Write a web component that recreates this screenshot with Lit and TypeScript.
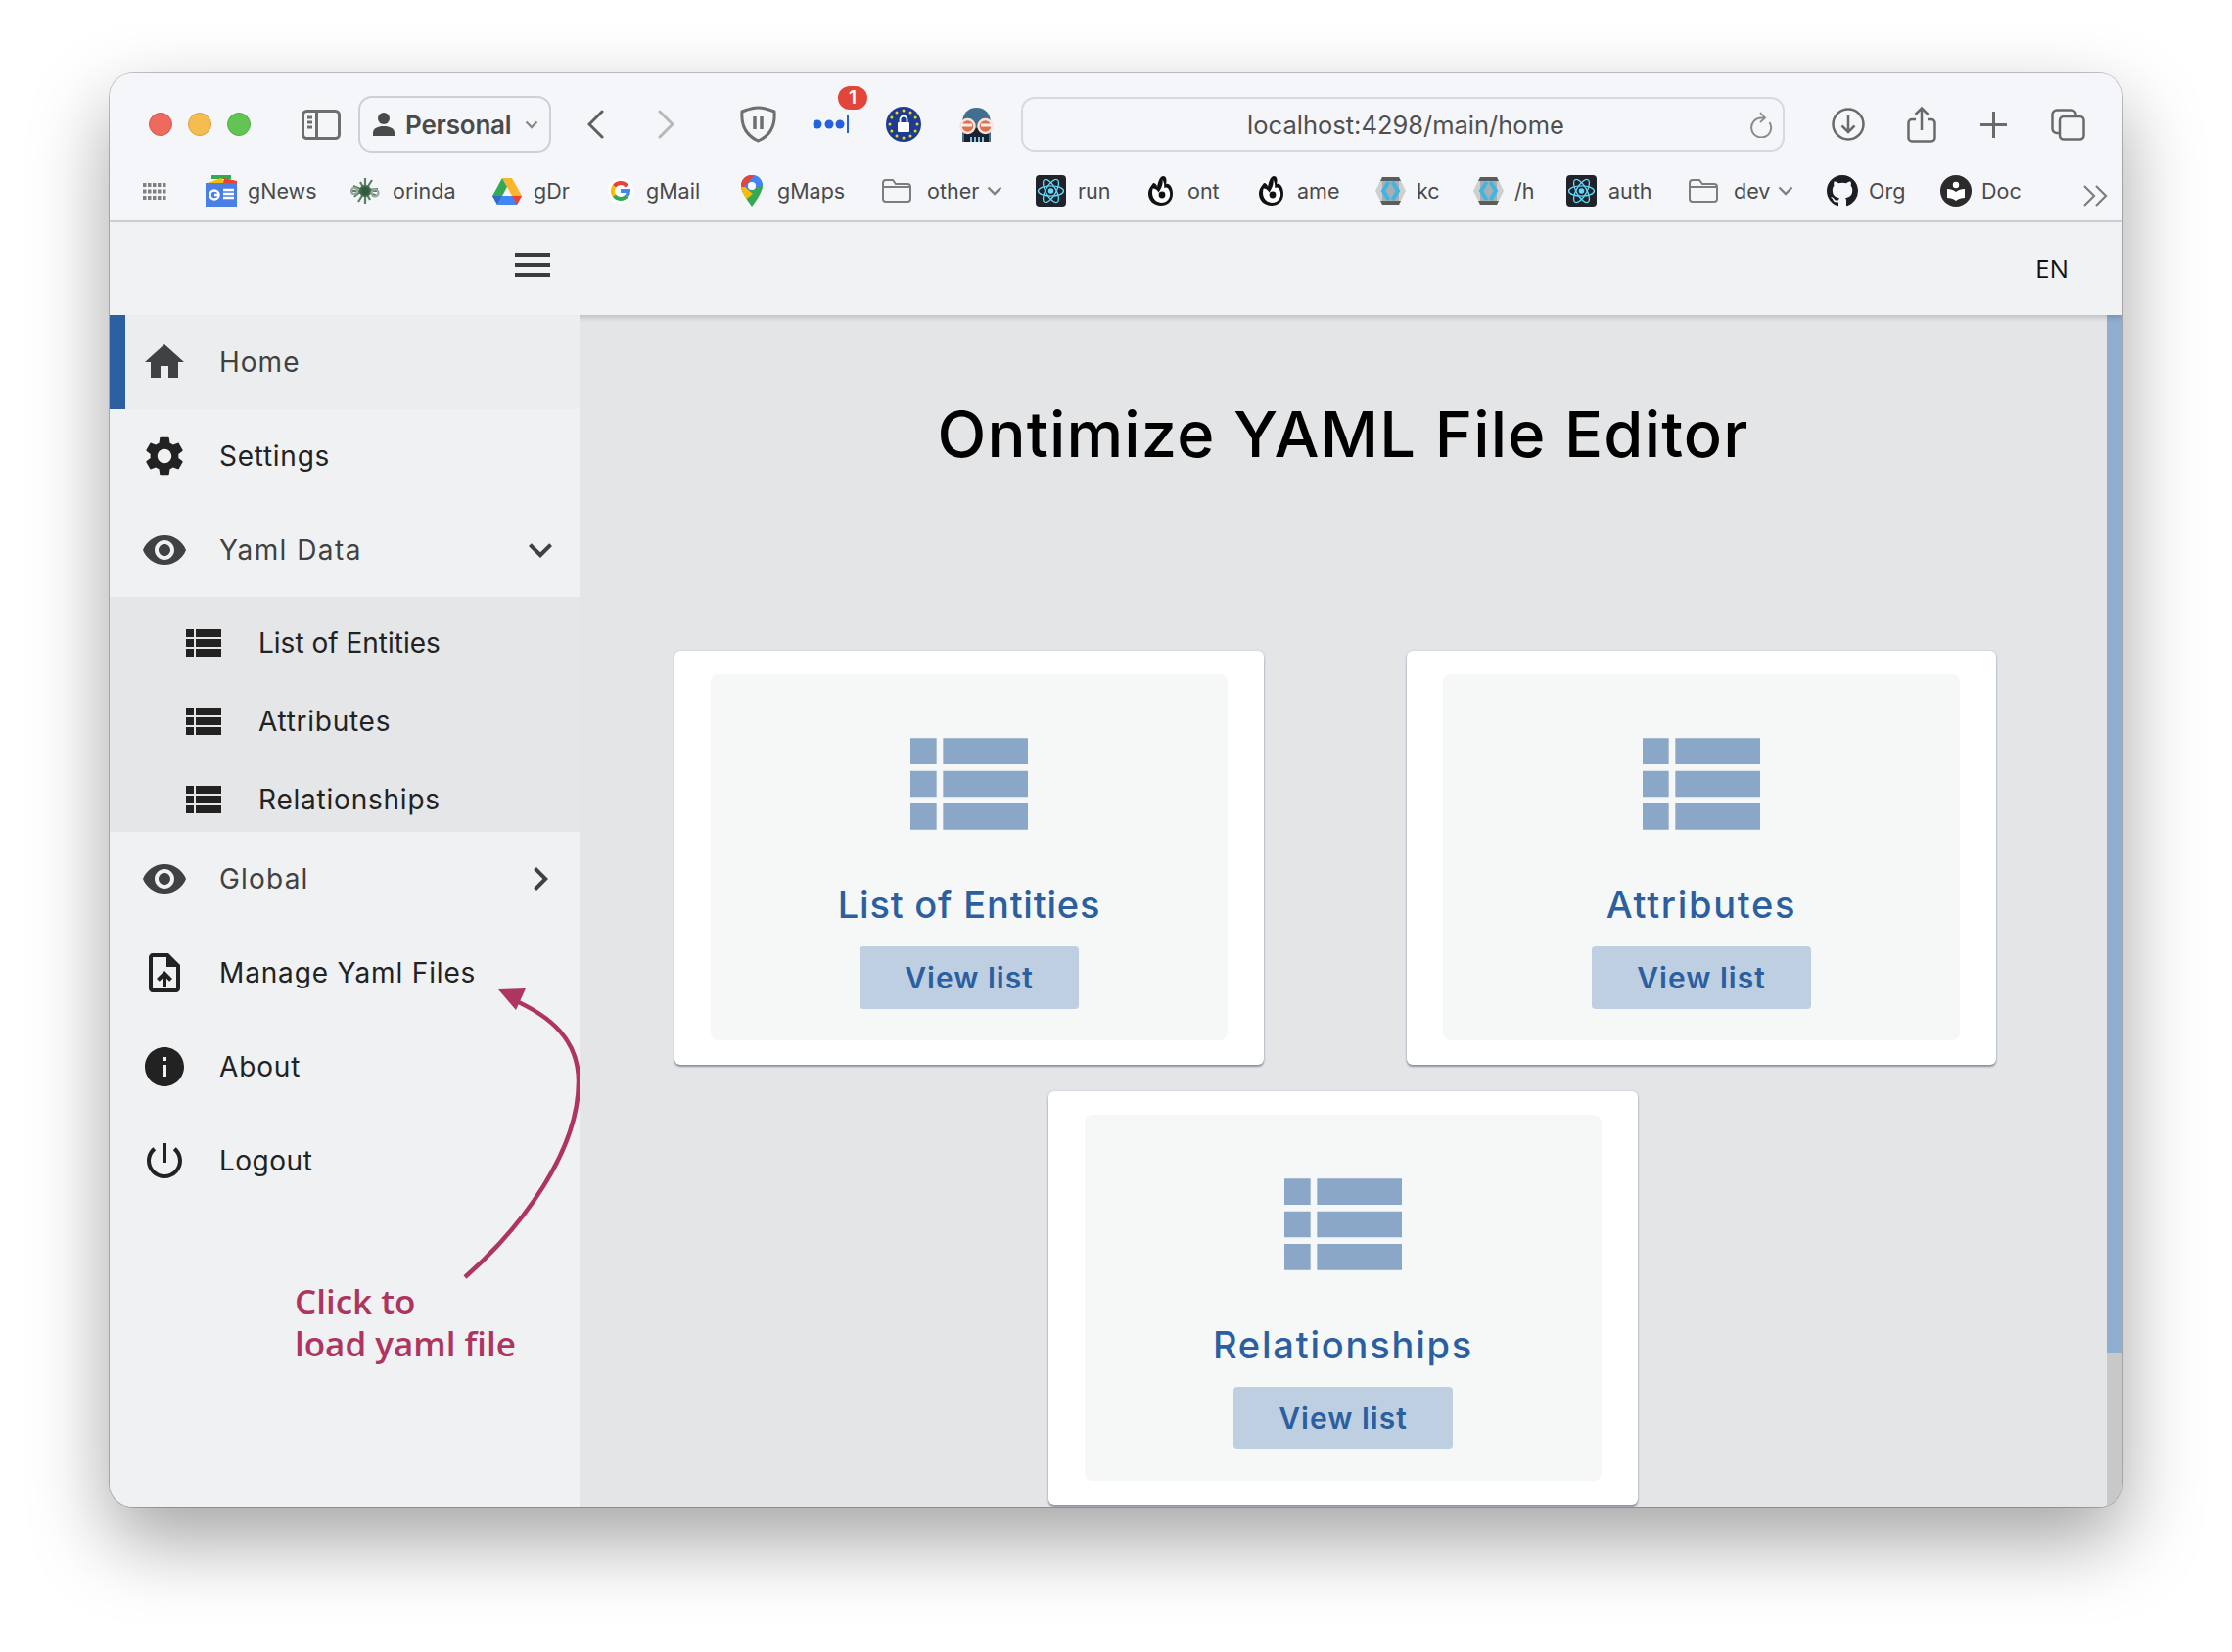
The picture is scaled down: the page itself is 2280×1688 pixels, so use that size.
import { LitElement, html, css, svg } from "lit";
import { customElement } from "lit/decorators.js";

// material icon paths, all on a 24 box
const ICONS: Record<string, string> = {
  home: "M10 20v-6h4v6h5v-8h3L12 3 2 12h3v8z",
  settings:
    "M19.14 12.94c.04-.3.06-.61.06-.94 0-.32-.02-.64-.07-.94l2.03-1.58c.18-.14.23-.41.12-.61l-1.92-3.32c-.12-.22-.37-.29-.59-.22l-2.39.96c-.5-.38-1.03-.7-1.62-.94l-.36-2.54c-.04-.24-.24-.41-.48-.41h-3.84c-.24 0-.43.17-.47.41l-.36 2.54c-.59.24-1.13.57-1.62.94l-2.39-.96c-.22-.08-.47 0-.59.22L2.74 8.87c-.12.21-.08.47.12.61l2.03 1.58c-.05.3-.09.63-.09.94s.02.64.07.94l-2.03 1.58c-.18.14-.23.41-.12.61l1.92 3.32c.12.22.37.29.59.22l2.39-.96c.5.38 1.03.7 1.62.94l.36 2.54c.05.24.24.41.48.41h3.84c.24 0 .44-.17.47-.41l.36-2.54c.59-.24 1.13-.56 1.62-.94l2.39.96c.22.08.47 0 .59-.22l1.92-3.32c.12-.22.07-.47-.12-.61l-2.01-1.58zM12 15.6c-1.98 0-3.6-1.62-3.6-3.6s1.62-3.6 3.6-3.6 3.6 1.62 3.6 3.6-1.62 3.6-3.6 3.6z",
  eye: "M12 4.5C7 4.5 2.73 7.61 1 12c1.73 4.39 6 7.5 11 7.5s9.27-3.11 11-7.5c-1.73-4.39-6-7.5-11-7.5zM12 17c-2.76 0-5-2.24-5-5s2.24-5 5-5 5 2.24 5 5-2.24 5-5 5zm0-8c-1.66 0-3 1.34-3 3s1.34 3 3 3 3-1.34 3-3-1.34-3-3-3z",
  more: "M16.59 8.59L12 13.17 7.41 8.59 6 10l6 6 6-6z",
  right: "M10 6L8.59 7.41 13.17 12l-4.58 4.59L10 18l6-6z",
  list: "M3 5h4v4H3zM8 5h13v4H8zM3 10h4v4H3zM8 10h13v4H8zM3 15h4v4H3zM8 15h13v4H8z",
  upload:
    "M14 2H6c-1.1 0-1.99.9-1.99 2L4 20c0 1.1.89 2 1.99 2H18c1.1 0 2-.9 2-2V8l-6-6zm4 18H6V4h7v5h5v11zM8 15.01l1.41 1.41L11 14.84V19h2v-4.16l1.59 1.59L16 15.01 12.01 11z",
  info: "M12 2C6.48 2 2 6.48 2 12s4.48 10 10 10 10-4.48 10-10S17.52 2 12 2zm1 15h-2v-6h2v6zm0-8h-2V7h2v2z",
  power:
    "M13 3h-2v10h2V3zm4.83 2.17l-1.42 1.42C17.99 7.86 19 9.81 19 12c0 3.87-3.13 7-7 7s-7-3.13-7-7c0-2.19 1.01-4.14 2.58-5.42L6.17 5.17C4.23 6.82 3 9.26 3 12c0 4.97 4.03 9 9 9s9-4.03 9-9c0-2.74-1.23-5.18-3.17-6.83z",
};

const mat = (name: string, cls = "ic48") =>
  html`<svg class=${cls} viewBox="0 0 24 24"><path d=${ICONS[name]} fill="currentColor"></path></svg>`;

const folder = html`<svg width="30" height="24" viewBox="0 0 30 24" fill="none" stroke="#7d7d7d" stroke-width="2">
  <path d="M1 20V4a3 3 0 0 1 3-3h7l3 4h12a3 3 0 0 1 3 3v12a3 3 0 0 1-3 3H4a3 3 0 0 1-3-3z"></path><path d="M1 8h28"></path>
</svg>`;

const smallChevron = html`<svg class="bm-chev" width="16" height="10" viewBox="0 0 16 10" fill="none" stroke="#808080" stroke-width="2.4">
  <path d="M1.5 1.5L8 8l6.5-6.5"></path>
</svg>`;

const atom = html`<svg width="31" height="32" viewBox="0 0 31 32">
  <rect width="31" height="32" rx="4" fill="#20232a"></rect>
  <g fill="none" stroke="#61dafb" stroke-width="1.3">
    <ellipse cx="15.5" cy="16" rx="13" ry="5.2"></ellipse>
    <ellipse cx="15.5" cy="16" rx="13" ry="5.2" transform="rotate(60 15.5 16)"></ellipse>
    <ellipse cx="15.5" cy="16" rx="13" ry="5.2" transform="rotate(120 15.5 16)"></ellipse>
  </g>
  <circle cx="15.5" cy="16" r="2.8" fill="#61dafb"></circle>
</svg>`;

const hand = html`<svg width="27" height="32" viewBox="0 0 27 32">
  <path d="M16 1c4 0 4 5 3 8 4-1 7 4 7 10 0 8-6 12-12 12C7 31 1 26 1 19c0-5 3-8 5-11 2 0 4 2 4 4 1-4 2-10 6-11z" fill="#111"></path>
  <path d="M15.500 4.500c.8 4-1 9-4 13-1.500-2.500-3.500-4-5.800-4-2 6 .3 13.500 8.300 14.500 6.500 0 10-5 9-10.500-.8-4.500-3.500-6-5.800-4.500.3-3-.2-6-1.700-8.500z" fill="#fff"></path>
  <circle cx="15" cy="20" r="3.400" fill="#111"></circle>
</svg>`;

const keycloak = html`<svg width="31" height="28" viewBox="0 0 31 28">
  <path d="M7 0h17l7 14-7 14H7L0 14z" fill="#cfcfcf"></path>
  <path d="M7 0h17l2 4H5zM5 24h21l-2 4H7z" fill="#5c5c5c"></path>
  <path d="M7 4h17v20H7z" fill="#a9aeb2"></path>
  <path d="M13.500 5L8 14l5.500 9M17.500 5L23 14l-5.500 9" fill="none" stroke="#3db5e6" stroke-width="4"></path>
</svg>`;

type Bookmark = { x: number; lx: number; label: string; icon: unknown; chev?: boolean };

const euStars = Array.from({ length: 12 }, (_, i) => {
  const a = (i * Math.PI) / 6;
  return svg`<circle cx=${18 + 14 * Math.cos(a)} cy=${18 + 14 * Math.sin(a)} r="1.500" fill="#f5d327"></circle>`;
});

const bookmarks: Bookmark[] = [
  {
    x: 210, lx: 253, label: "gNews",
    icon: html`<svg width="32" height="32" viewBox="0 0 32 32">
      <path d="M6 4V0h20v4z" fill="#34a853"></path>
      <path d="M2 8l14-5 4 5z" fill="#fbbc04"></path>
      <path d="M18 8l1-5 13 3v2z" fill="#ea4335"></path>
      <rect y="8" width="32" height="24" fill="#4a7fe5"></rect>
      <circle cx="9" cy="20" r="4.500" fill="none" stroke="#fff" stroke-width="2.500"></circle>
      <path d="M9 20h5M18 15h11M18 19h11M18 23h11" stroke="#fff" stroke-width="2.400"></path>
    </svg>`,
  },
  {
    x: 358, lx: 401, label: "orinda",
    icon: html`<svg width="30" height="30" viewBox="0 0 30 30" fill="none" stroke="#3f6b49" stroke-width="2.200">
      <path d="M15 2v26M10 6l10 18M22 4L8 26M2 15h26M3 10l24 10M4 21c4-6 18-8 24-8" opacity=".85"></path>
      <circle cx="15" cy="15" r="5" fill="#2f5c3b"></circle>
      <circle cx="25" cy="17" r="3.500" stroke="#98a79c"></circle>
      <circle cx="4" cy="15" r="3" stroke="#98a79c"></circle>
    </svg>`,
  },
  {
    x: 503, lx: 545, label: "gDr",
    icon: html`<svg width="30" height="27" viewBox="0 0 30 27">
      <path d="M10 0h10l10 18h-10z" fill="#f9b62c"></path>
      <path d="M10 0l5 9-10 18-5-9z" fill="#34a853"></path>
      <path d="M10 18h20l-5 9H5z" fill="#4285f4"></path>
      <path d="M5 27l5-9h-10z" fill="#2b6bd6"></path>
      <path d="M25 27l5-9h-10z" fill="#ea4335"></path>
    </svg>`,
  },
  {
    x: 621, lx: 660, label: "gMail",
    icon: html`<svg width="26" height="30" viewBox="0 0 26 30">
      <circle cx="13" cy="15" r="13" fill="#fff"></circle>
      <g fill="none" stroke-width="4">
        <path d="M19.400 10.200A8 8 0 0 0 6.500 10.300" stroke="#ea4335"></path>
        <path d="M6.500 10.300A8 8 0 0 0 6.500 19.700" stroke="#fbbc04"></path>
        <path d="M6.500 19.700A8 8 0 0 0 19 20.300" stroke="#34a853"></path>
        <path d="M19 20.300A8 8 0 0 0 21 15h-8" stroke="#4285f4"></path>
      </g>
    </svg>`,
  },
  {
    x: 756, lx: 794, label: "gMaps",
    icon: html`<svg width="24" height="32" viewBox="0 0 24 32">
      <clipPath id="pin"><path d="M12 0C5.500 0 1 4.800 1 11c0 7 11 21 11 21s11-14 11-21C23 4.800 18.500 0 12 0z"></path></clipPath>
      <g clip-path="url(#pin)">
        <rect width="24" height="32" fill="#34a853"></rect>
        <path d="M0 0h24v10L0 20z" fill="#4285f4"></path>
        <path d="M0 0h15L4 12H0z" fill="#ea4335"></path>
        <path d="M0 12h5l8 7-9 7-4-5z" fill="#fbbc04"></path>
      </g>
      <circle cx="12" cy="11" r="4" fill="#fff"></circle>
    </svg>`,
  },
  { x: 901, lx: 947, label: "other", icon: folder, chev: true },
  { x: 1058, lx: 1101, label: "run", icon: atom },
  { x: 1172, lx: 1213, label: "ont", icon: hand },
  { x: 1285, lx: 1325, label: "ame", icon: hand },
  { x: 1405, lx: 1447, label: "kc", icon: keycloak },
  { x: 1505, lx: 1547, label: "/h", icon: keycloak },
  { x: 1600, lx: 1643, label: "auth", icon: atom },
  { x: 1725, lx: 1771, label: "dev", icon: folder, chev: true },
  {
    x: 1866, lx: 1909, label: "Org",
    icon: html`<svg width="32" height="32" viewBox="0 0 16 16">
      <path fill="#1b1f23" d="M8 0C3.580 0 0 3.580 0 8c0 3.540 2.290 6.530 5.470 7.590.4.07.55-.17.55-.38 0-.19-.01-.82-.01-1.490-2.010.37-2.530-.49-2.690-.94-.09-.23-.48-.94-.82-1.130-.28-.15-.68-.52-.01-.53.63-.01 1.080.58 1.230.82.72 1.210 1.870.87 2.330.66.07-.52.28-.87.51-1.070-1.780-.2-3.640-.89-3.640-3.950 0-.87.31-1.590.82-2.150-.08-.2-.36-1.020.08-2.120 0 0 .67-.21 2.200.82.64-.18 1.320-.27 2-.27s1.360.09 2 .27c1.530-1.040 2.200-.82 2.200-.82.44 1.100.16 1.920.08 2.120.51.56.82 1.270.82 2.150 0 3.070-1.870 3.750-3.650 3.950.29.25.54.73.54 1.480 0 1.070-.01 1.930-.01 2.200 0 .21.15.46.55.38A8.013 8.013 0 0 0 16 8c0-4.420-3.580-8-8-8z"></path>
    </svg>`,
  },
  {
    x: 1982, lx: 2024, label: "Doc",
    icon: html`<svg width="32" height="32" viewBox="0 0 32 32">
      <circle cx="16" cy="16" r="16" fill="#2b2b2b"></circle>
      <circle cx="16" cy="10" r="3.200" fill="#fff"></circle>
      <path d="M7 14c3 0 7 1 9 3 2-2 6-3 9-3v9c-3 0-7 1-9 3-2-2-6-3-9-3z" fill="#fff"></path>
    </svg>`,
  },
];

// track: letter spacing so each label keeps the width it has in the design
type Nav = { icon: string; label: string; tone: string; track: number; chevron?: string; active?: boolean };

const topNav: Nav[] = [
  { icon: "home", label: "Home", tone: "soft", track: 1, active: true },
  { icon: "settings", label: "Settings", tone: "dark", track: 0.73 },
  { icon: "eye", label: "Yaml Data", tone: "soft", track: 1.45, chevron: "more" },
];
const subNav = [
  { label: "List of Entities", track: 0 },
  { label: "Attributes", track: 0.73 },
  { label: "Relationships", track: 0.78 },
];
const bottomNav: Nav[] = [
  { icon: "eye", label: "Global", tone: "soft", track: 1.2, chevron: "right" },
  { icon: "upload", label: "Manage Yaml Files", tone: "dark", track: 0.85 },
  { icon: "info", label: "About", tone: "dark", track: 0.87 },
  { icon: "power", label: "Logout", tone: "dark", track: 0.5 },
];

@customElement("app-root")
export class AppRoot extends LitElement {
  static styles = css`
    :host {
      display: block;
      box-sizing: border-box;
      width: 2280px;
      height: 1688px;
      padding: 75px 112px 0;
      background: #fff;
      overflow: hidden;
      font-family: Inter, "Liberation Sans", sans-serif;
    }
    .window {
      width: 2056px;
      height: 1465px;
      display: flex;
      flex-direction: column;
      border-radius: 24px;
      overflow: hidden;
      box-shadow: 0 34px 80px rgba(0, 0, 0, 0.36), 0 0 0 1px rgba(0, 0, 0, 0.22);
    }

    /* browser chrome */
    .chrome {
      height: 152px;
      box-sizing: border-box;
      background: #f5f6fa;
      border-bottom: 2px solid #d3d4d6;
      flex: none;
    }
    .row1 {
      display: flex;
      align-items: center;
      height: 56px;
      margin-top: 24px;
      padding-left: 40px;
    }
    .light { width: 24px; height: 24px; border-radius: 50%; margin-right: 16px; box-sizing: border-box; }
    .red { background: #ee6a5f; border: 1px solid #d9574d; }
    .yellow { background: #f5bd4f; border: 1px solid #dea23a; }
    .green { background: #61c454; border: 1px solid #52ae45; }
    .side-toggle { margin-left: 36px; }
    .pill {
      width: 197px;
      height: 58px;
      margin-left: 18px;
      box-sizing: border-box;
      border: 2px solid #cfd0d4;
      border-radius: 14px;
      display: flex;
      align-items: center;
      padding-left: 13px;
      color: #4a4a4a;
      font-size: 26px;
      font-weight: 600;
    }
    .pill span { margin-left: 11px; letter-spacing: -0.2px; }
    .pill .pill-chev { margin-left: 14px; }
    .back { margin-left: 37px; }
    .forward { margin-left: 55px; }
    .shield { margin-left: 67px; }
    .dots { margin-left: 37px; position: relative; display: flex; }
    .badge {
      position: absolute;
      left: 26px;
      top: -30px;
      width: 30px;
      height: 24px;
      border-radius: 12px;
      background: #e2453a;
      color: #fff;
      font-size: 19px;
      font-weight: 600;
      line-height: 24px;
      text-align: center;
    }
    .eu { margin-left: 37px; }
    .hacker { margin-left: 38px; }
    .url {
      width: 780px;
      height: 56px;
      margin-left: 27px;
      padding-left: 6px;
      box-sizing: border-box;
      border: 2px solid #d8d9dd;
      border-radius: 14px;
      display: flex;
      align-items: center;
      justify-content: center;
      position: relative;
      color: #4f4f4f;
      font-size: 25.5px;
    }
    .reload { position: absolute; right: 10px; top: 12px; }
    .dl { margin-left: 48px; }
    .share { margin-left: 43px; }
    .plus { margin-left: 44px; }
    .tabs { margin-left: 44px; }
    .row2 {
      display: flex;
      align-items: center;
      height: 40px;
      margin-top: 20px;
      padding-left: 34px;
      color: #4a4a4a;
      font-size: 21.5px;
      position: relative;
    }
    .apps { width: 64px; flex: none; display: flex; }
    .bm { display: flex; align-items: center; flex: none; white-space: nowrap; }
    .bm-icon { display: flex; align-items: center; flex: none; }
    .bm-chev { margin-left: 8px; }
    .overflow { position: absolute; right: 15px; top: 13px; }

    /* app header */
    .header {
      height: 95px;
      flex: none;
      display: flex;
      align-items: center;
      justify-content: space-between;
      padding: 0 55px 0 414px;
      background: #f1f2f4;
      box-shadow: 0 2px 6px rgba(0, 0, 0, 0.2);
      position: relative;
      z-index: 1;
    }
    .burger { width: 36px; display: flex; flex-direction: column; gap: 6px; margin-top: -7px; }
    .burger i { display: block; height: 4px; background: #3c3c3c; }
    .lang { font-family: "Open Sans", sans-serif; font-size: 26px; color: #111; margin-top: -2px; }

    .body { flex: 1; display: flex; min-height: 0; }

    /* sidebar */
    .sidebar {
      width: 480px;
      flex: none;
      background: #eff1f3;
      position: relative;
      z-index: 2;
    }
    .nav {
      height: 96px;
      box-sizing: border-box;
      display: flex;
      align-items: center;
      padding: 0 16px 0 32px;
      font-size: 28px;
    }
    .nav.active { border-left: 16px solid #2b5fa0; padding-left: 16px; background: #ecedef; }
    .nav .label { margin-left: 32px; }
    .nav .chev { margin-left: auto; }
    .soft { color: #3f4142; }
    .dark { color: #222; }
    .ic48 { width: 48px; height: 48px; flex: none; display: block; }
    .sub { background: #e5e6e8; height: 240px; box-sizing: border-box; padding-top: 7px; }
    .sub-row { height: 80px; display: flex; align-items: center; padding-left: 72px; font-size: 28px; color: #222; }
    .sub-row .label { margin-left: 32px; }
    .arrow { position: absolute; left: 0; top: 0; pointer-events: none; }
    .note {
      position: absolute;
      left: 189px;
      top: 986px;
      font-family: "Open Sans", sans-serif;
      font-size: 35px;
      font-weight: 600;
      line-height: 43px;
      color: #ad3560;
    }

    /* main area */
    .main { flex: 1; display: flex; flex-direction: column; background: #e4e5e7; overflow: hidden; }
    h1 {
      margin: 74px 0 0;
      font-size: 65px;
      font-weight: 500;
      letter-spacing: 1.15px;
      line-height: 96px;
      text-align: center;
      color: #000;
    }
    .cards-top { display: flex; gap: 146px; padding-left: 97px; margin-top: 173px; }
    .cards-bottom { display: flex; justify-content: center; margin-top: 27px; }
    .card {
      width: 602px;
      height: 423px;
      box-sizing: border-box;
      padding: 24px 37px 25px;
      background: #fff;
      border-radius: 6px;
      box-shadow: 0 2px 2px rgba(60, 70, 90, 0.5), 0 0 2px rgba(140, 165, 200, 0.5);
    }
    .inner {
      height: 100%;
      box-sizing: border-box;
      padding-top: 32px;
      background: #f6f8f8;
      border-radius: 8px;
      display: flex;
      flex-direction: column;
      align-items: center;
    }
    .big { width: 160px; height: 160px; color: #8ba7c7; flex: none; }
    .title {
      height: 86px;
      display: flex;
      align-items: center;
      font-size: 38px;
      font-weight: 500;
      color: #2b5fa0;
    }
    .btn {
      width: 224px;
      height: 64px;
      border-radius: 4px;
      background: #bfcfe2;
      color: #2b5fa0;
      font-size: 30px;
      font-weight: 600;
      letter-spacing: 1px;
      display: flex;
      align-items: center;
      justify-content: center;
    }
    .scroll { width: 16px; flex: none; background: #c8c8c8; }
    .thumb { height: 1060px; background: #90aed0; }
  `;

  private navRow(n: Nav) {
    return html`<div class="nav ${n.tone} ${n.active ? "active" : ""}">
      ${mat(n.icon)}
      <span class="label" style="letter-spacing:${n.track}px">${n.label}</span>
      ${n.chevron ? mat(n.chevron, "ic48 chev") : ""}
    </div>`;
  }

  private card(title: string, track: number) {
    return html`<div class="card">
      <div class="inner">
        ${mat("list", "big")}
        <div class="title" style="letter-spacing:${track}px">${title}</div>
        <div class="btn">View list</div>
      </div>
    </div>`;
  }

  private chrome() {
    return html`<div class="chrome">
      <div class="row1">
        <div class="light red"></div>
        <div class="light yellow"></div>
        <div class="light green"></div>
        <svg class="side-toggle" width="40" height="31" viewBox="0 0 40 31" fill="none" stroke="#6e6e6e" stroke-width="3">
          <rect x="1.500" y="1.500" width="37" height="28" rx="4"></rect>
          <path d="M15.500 1.500v28M6 8h5M6 13h5M6 18h5" ></path>
        </svg>
        <div class="pill">
          <svg width="22" height="24" viewBox="0 0 22 24" fill="#4a4a4a">
            <circle cx="11" cy="6" r="6"></circle>
            <path d="M0 24v-3c0-5 5-7 11-7s11 2 11 7v3z"></path>
          </svg>
          <span>Personal</span>
          <svg class="pill-chev" width="14" height="9" viewBox="0 0 14 9" fill="none" stroke="#8a8a8a" stroke-width="2.400">
            <path d="M1.500 1.500L7 7l5.500-5.500"></path>
          </svg>
        </div>
        <svg class="back" width="17" height="30" viewBox="0 0 17 30" fill="none" stroke="#5f5f5f" stroke-width="3" stroke-linecap="round"><path d="M15 2L2 15l13 13"></path></svg>
        <svg class="forward" width="17" height="30" viewBox="0 0 17 30" fill="none" stroke="#b8b8b8" stroke-width="3" stroke-linecap="round"><path d="M2 2l13 13L2 28"></path></svg>
        <svg class="shield" width="37" height="38" viewBox="0 0 37 38" fill="none" stroke="#6f6f6f" stroke-width="3">
          <path d="M18.500 2C24 2 30 4 35 6c1 12-3 24-16.500 30C5 30 1 18 2 6 7 4 13 2 18.500 2z"></path>
          <path d="M15 11v13M22 11v13" stroke-width="3.500"></path>
        </svg>
        <div class="dots">
          <svg width="38" height="18" viewBox="0 0 38 18" fill="#2460e0">
            <circle cx="5" cy="9" r="4.500"></circle>
            <circle cx="17" cy="9" r="4.500"></circle>
            <circle cx="28" cy="9" r="4.500"></circle>
            <rect x="35" y="0" width="2" height="18"></rect>
          </svg>
          <div class="badge">1</div>
        </div>
        <svg class="eu" width="36" height="36" viewBox="0 0 36 36">
          <circle cx="18" cy="18" r="18" fill="#1c3d8f"></circle>
          ${euStars}
          <path d="M14.500 16v-3a3.500 3.500 0 0 1 7 0v3" fill="none" stroke="#fff" stroke-width="1.800"></path>
          <rect x="12" y="16" width="12" height="10" rx="1" fill="#fff"></rect>
        </svg>
        <svg class="hacker" width="37" height="36" viewBox="0 0 37 36">
          <path d="M4 36V17C4 7 10 1 18.500 1S33 7 33 17v19z" fill="#41708f"></path>
          <path d="M6 22h25v14H6z" fill="#1a2230"></path>
          <path d="M13 31v5M17 31v5M21 31v5M25 31v5" stroke="#7fc4e6" stroke-width="2"></path>
          <circle cx="9.500" cy="20" r="7" fill="#e0714f" stroke="#f6e3dc" stroke-width="2.500"></circle>
          <circle cx="27.500" cy="20" r="7" fill="#e0714f" stroke="#f6e3dc" stroke-width="2.500"></circle>
          <path d="M3 19h11M23 19h11" stroke="#fbf0ec" stroke-width="3"></path>
        </svg>
        <div class="url">
          localhost:4298/main/home
          <svg class="reload" width="24" height="28" viewBox="0 0 24 28" fill="none" stroke="#8b8b8b" stroke-width="2">
            <path d="M20.500 12a10 10 0 1 1-8-4.500h3"></path><path d="M11 2l5 5.500L11 12" stroke-width="1.800"></path>
          </svg>
        </div>
        <svg class="dl" width="34" height="34" viewBox="0 0 34 34" fill="none" stroke="#6a6a6a" stroke-width="2.500">
          <circle cx="17" cy="17" r="15.500"></circle><path d="M17 8v17M10.500 18.500L17 25l6.500-6.500"></path>
        </svg>
        <svg class="share" width="30" height="37" viewBox="0 0 30 37" fill="none" stroke="#6a6a6a" stroke-width="2.500">
          <path d="M9 13H5a3.500 3.500 0 0 0-3.500 3.500V32A3.500 3.500 0 0 0 5 35.500h20a3.500 3.500 0 0 0 3.500-3.500V16.500A3.500 3.500 0 0 0 25 13h-4"></path>
          <path d="M15 24V2M8.500 8L15 1.500 21.500 8"></path>
        </svg>
        <svg class="plus" width="29" height="29" viewBox="0 0 29 29" stroke="#6a6a6a" stroke-width="3"><path d="M14.500 1v27M1 14.500h27"></path></svg>
        <svg class="tabs" width="35" height="33" viewBox="0 0 35 33" fill="none" stroke="#6a6a6a" stroke-width="2.500">
          <rect x="9" y="8" width="24.500" height="23.500" rx="4"></rect>
          <path d="M9 25H6a4.500 4.500 0 0 1-4.500-4.500V6A4.500 4.500 0 0 1 6 1.500h15A4.500 4.500 0 0 1 25.500 6v2"></path>
        </svg>
      </div>
      <div class="row2">
        <svg class="apps" width="64" height="17" viewBox="0 0 64 17" fill="#808080">
          ${[0, 1, 2, 3, 4].map((c) =>
            [0, 1, 2].map((r) => svg`<rect x=${c * 5} y=${r * 6.5} width="3.500" height="4"></rect>`)
          )}
        </svg>
        ${bookmarks.map((b, i) => {
          const next = bookmarks[i + 1];
          return html`<div class="bm" style="width:${next ? next.x - b.x : 85}px">
            <span class="bm-icon" style="width:${b.lx - b.x}px">${b.icon}</span>
            ${b.label}${b.chev ? smallChevron : ""}
          </div>`;
        })}
        <svg class="overflow" width="26" height="24" viewBox="0 0 26 24" fill="none" stroke="#7d7d7d" stroke-width="2.200">
          <path d="M2 2l10 10L2 22M14 2l10 10-10 10"></path>
        </svg>
      </div>
    </div>`;
  }

  render() {
    return html`<div class="window">
      ${this.chrome()}
      <div class="header">
        <div class="burger"><i></i><i></i><i></i></div>
        <div class="lang">EN</div>
      </div>
      <div class="body">
        <div class="sidebar">
          ${topNav.map((n) => this.navRow(n))}
          <div class="sub">
            ${subNav.map(
              (s) => html`<div class="sub-row">${mat("list")}<span class="label" style="letter-spacing:${s.track}px">${s.label}</span></div>`
            )}
          </div>
          ${bottomNav.map((n) => this.navRow(n))}
          <svg class="arrow" width="480" height="1218" viewBox="112 322 480 1218" fill="none">
            <path d="M475 1305C535 1252 591 1175 591 1105C591 1062 562 1038 523 1021" stroke="#ad3560" stroke-width="4.500"></path>
            <path d="M509 1011L537 1010L527 1032Z" fill="#ad3560"></path>
          </svg>
          <div class="note">Click to<br />load yaml file</div>
        </div>
        <div class="main">
          <h1>Ontimize YAML File Editor</h1>
          <div class="cards-top">${this.card("List of Entities", 0.8)}${this.card("Attributes", 1.7)}</div>
          <div class="cards-bottom">${this.card("Relationships", 1.8)}</div>
        </div>
        <div class="scroll"><div class="thumb"></div></div>
      </div>
    </div>`;
  }
}
